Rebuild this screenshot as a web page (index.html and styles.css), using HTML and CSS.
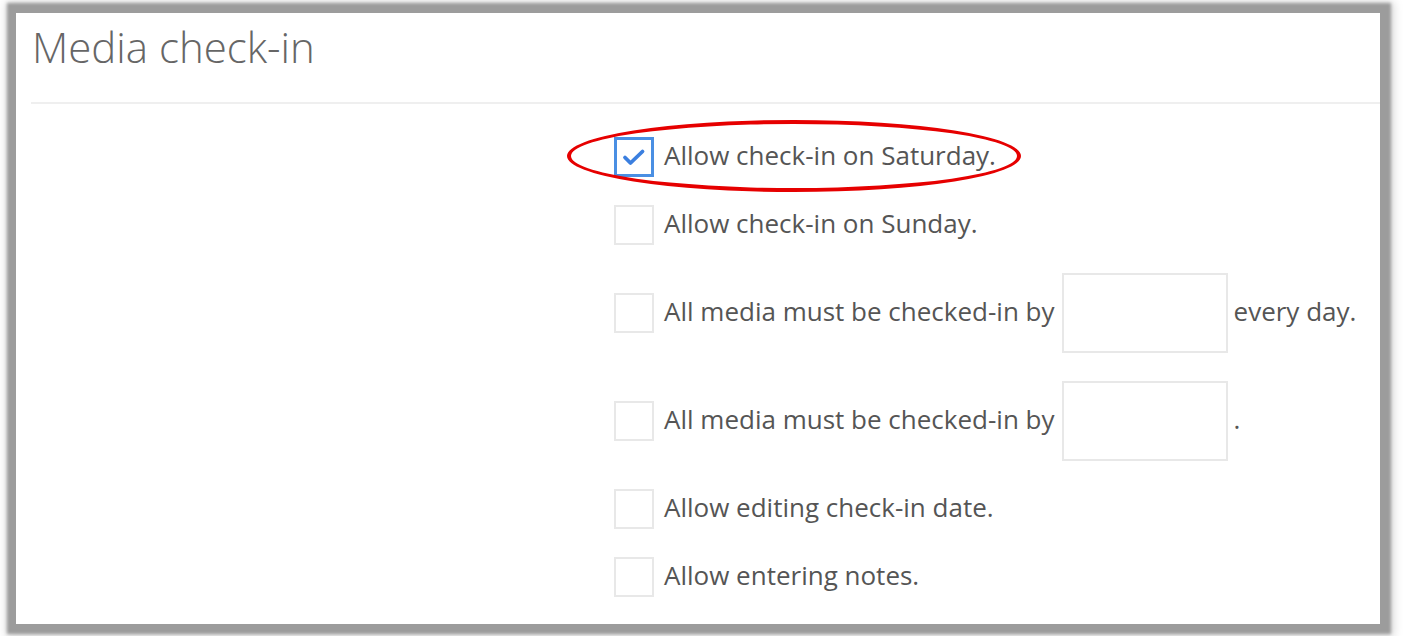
FILE: index.html
```html
<!DOCTYPE html>
<html>
<head>
<meta charset="utf-8">
<link rel="stylesheet" href="styles.css">
</head>
<body>
<div class="frame">
  <h1 class="title">Media check-in</h1>
  <div class="divider"></div>
  <div class="form">
    <div class="label-col"></div>
    <div class="options">
      <div class="row highlighted">
        <span class="box checked">
          <svg viewBox="0 0 34 34" width="34" height="34"><path d="M8 17.5 L13.5 23 L25.5 11.5" fill="none" stroke="#3b7fdf" stroke-width="3.8" stroke-linecap="round" stroke-linejoin="round"/></svg>
        </span>
        <span class="text">Allow check-in on Saturday.</span>
        <span class="ring"></span>
      </div>
      <div class="row">
        <span class="box"></span>
        <span class="text">Allow check-in on Sunday.</span>
      </div>
      <div class="row">
        <span class="box"></span>
        <span class="text">All media must be checked-in by</span>
        <span class="input"></span>
        <span class="text">every day.</span>
      </div>
      <div class="row">
        <span class="box"></span>
        <span class="text">All media must be checked-in by</span>
        <span class="input"></span>
        <span class="text">.</span>
      </div>
      <div class="row">
        <span class="box"></span>
        <span class="text">Allow editing check-in date.</span>
      </div>
      <div class="row">
        <span class="box"></span>
        <span class="text">Allow entering notes.</span>
      </div>
    </div>
  </div>
</div>
</body>
</html>
```
FILE: styles.css
```css
html, body {
  margin: 0;
  padding: 0;
  background: #ffffff;
  width: 1403px;
  height: 636px;
  overflow: hidden;
}
.frame {
  margin: 13px 0 0 16px;
  width: 1364px;
  height: 611px;
  background: #ffffff;
  box-shadow: 1px 0 3px 10px #9c9c9c, 2px 1px 9px 12px #dadada;
  overflow: hidden;
  font-family: "Open Sans", "DejaVu Sans", sans-serif;
  color: #555555;
}
.title {
  margin: 0;
  padding: 5px 0 0 16px;
  height: 70px;
  font-size: 42px;
  font-weight: 300;
  line-height: 58px;
  color: #666666;
}
.divider {
  margin: 14px 0 0 15px;
  height: 2px;
  background: #efefef;
}
.form {
  display: grid;
  grid-template-columns: 598px 1fr;
  padding-top: 33px;
}
.options {
  display: flex;
  flex-direction: column;
  gap: 28px;
}
.row {
  display: flex;
  align-items: center;
  gap: 10px;
  position: relative;
  min-height: 40px;
}
.box {
  box-sizing: border-box;
  width: 40px;
  height: 40px;
  border: 2px solid #e8e8e8;
  display: flex;
  align-items: center;
  justify-content: center;
  flex: none;
}
.box.checked {
  border: 3px solid #4a8fe3;
}
.text {
  font-size: 26px;
  line-height: 36px;
  padding-bottom: 4px;
  white-space: nowrap;
}
.input {
  box-sizing: border-box;
  width: 166px;
  height: 80px;
  border: 2px solid #e8e8e8;
  flex: none;
  margin-left: -3px;
  margin-right: -4px;
}
.ring {
  position: absolute;
  left: -47px;
  top: -17px;
  width: 454px;
  height: 72px;
  box-sizing: border-box;
  border: 4px solid #e60000;
  border-radius: 50%;
}
```
